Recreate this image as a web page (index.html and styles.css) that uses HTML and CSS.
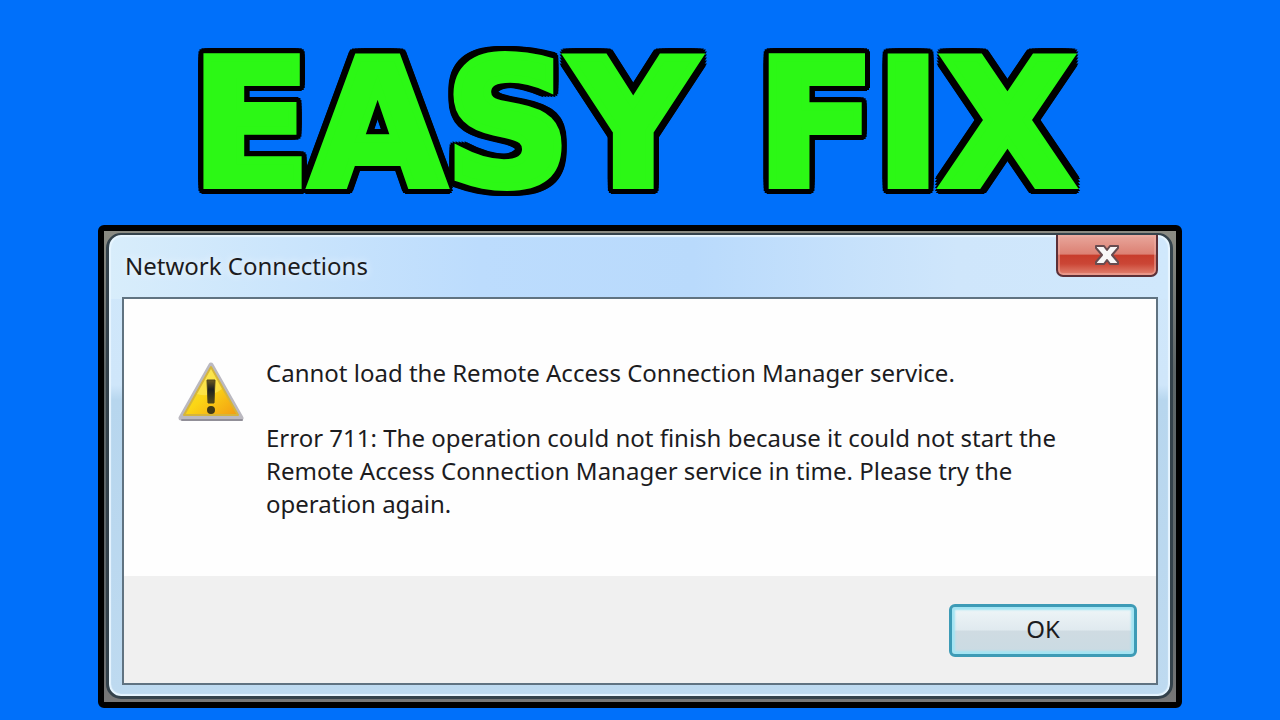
FILE: index.html
```
<!DOCTYPE html>
<html lang="en">
<head>
<meta charset="utf-8">
<meta name="viewport" content="width=device-width, initial-scale=1">
<title>Easy Fix</title>
<link rel="stylesheet" href="styles.css">
</head>
<body>
<h1 class="headline"><span>E</span><span>A</span><span>S</span><span>Y</span> <span>F</span><span>I</span><span>X</span></h1>
<main class="frame">
  <section class="window" role="dialog" aria-labelledby="title">
    <header class="titlebar">
      <h2 class="title" id="title">Network Connections</h2>
      <button class="close" type="button" aria-label="Close">
        <svg width="26" height="22" viewBox="0 0 26 22" aria-hidden="true">
          <path d="M2 2H10L13 6L16 2H24V4L18 11L24 18V20H16L13 16L10 20H2V18L8 11L2 4Z" fill="#f7f7f7" stroke="#674c50" stroke-width="2" stroke-linejoin="round"/>
        </svg>
      </button>
    </header>
    <div class="client">
      <div class="content">
        <svg class="warning" width="70" height="64" viewBox="0 0 70 64" role="img" aria-label="Warning">
          <defs>
            <linearGradient id="gold" x1="0" y1="0" x2="1" y2="1">
              <stop offset="0" stop-color="#eee34c"/>
              <stop offset=".5" stop-color="#fbd515"/>
              <stop offset="1" stop-color="#f29b12"/>
            </linearGradient>
            <linearGradient id="ink" x1="0" y1="0" x2="0" y2="1">
              <stop offset="0" stop-color="#6b5a20"/>
              <stop offset=".4" stop-color="#1d2020"/>
              <stop offset="1" stop-color="#51491a"/>
            </linearGradient>
          </defs>
          <path d="M35 5L65 58H5Z" fill="#aaa9b4" stroke="#bbb9c0" stroke-width="5" stroke-linejoin="round"/>
          <path d="M6 60H66" stroke="#918f98" stroke-width="2" stroke-linecap="round"/>
          <path d="M35 7L62 55H8Z" fill="url(#gold)" stroke="#d5b53c" stroke-width="2" stroke-linejoin="round"/>
          <path d="M35 9L21 34Q34 38 46 29Z" fill="#fff27a" opacity=".45"/>
          <path d="M31 20H39L38 43H32Z" fill="url(#ink)" stroke="#4d431d" stroke-width="1"/>
          <ellipse cx="35" cy="50" rx="4" ry="4" fill="#403916"/>
        </svg>
        <div class="message">
          <p>Cannot load the Remote Access Connection Manager service.</p>
          <p>Error 711: The operation could not finish because it could not start the Remote Access Connection Manager service in time. Please try the operation again.</p>
        </div>
      </div>
      <footer class="actions">
        <button class="ok" type="button">OK</button>
      </footer>
    </div>
  </section>
</main>
</body>
</html>
```
FILE: styles.css
```
* { box-sizing: border-box; }

body {
  margin: 0;
  min-height: 100vh;
  padding: 0 98px 12px;
  display: flex;
  flex-direction: column;
  background: #0070fa;
  color: #1c1c1e;
  font-family: "Noto Sans", "Open Sans", sans-serif;
}

.headline {
  margin: 0;
  padding: 19px 14px 0 0;
  height: 225px;
  text-align: center;
  white-space: nowrap;
  font: 700 174px/212px "DejaVu Sans", sans-serif;
  color: #2cf815;
  -webkit-text-stroke: 8px #2cf815;
  text-shadow: 9px 0 #000, -9px 0 #000, 0 9px #000, 0 -9px #000,
    9px 3px #000, 9px -3px #000, -9px 3px #000, -9px -3px #000,
    3px 9px #000, -3px 9px #000, 3px -9px #000, -3px -9px #000,
    9px 6px #000, 9px -6px #000, -9px 6px #000, -9px -6px #000,
    6px 9px #000, -6px 9px #000, 6px -9px #000, -6px -9px #000,
    8px 8px #000, -8px 8px #000, 8px -8px #000, -8px -8px #000;
}

.frame {
  flex: 1;
  display: flex;
  border: 6px solid #000;
  border-radius: 6px;
  padding: 2px 3px 3px 2px;
  background: linear-gradient(#8b8b83, #5d6668 30%, #60686b 80%, #777);
}

.window {
  flex: 1;
  display: flex;
  flex-direction: column;
  padding: 0 12px 11px 13px;
  border: 3px solid #34424b;
  border-top-width: 2px;
  border-radius: 15px;
  background: linear-gradient(90deg, #d8edfb, #bcdcfd 35%, #b9dafc 55%, #cfe6fb 80%, #d0e8fc) top / 100% 64px no-repeat,
    linear-gradient(#d0e8fb, #cfe6fa 150px, #b7d6ee 165px, #bedaf0);
  box-shadow: inset 0 0 1px 2px #e8f6ff;
}

.titlebar {
  display: flex;
  justify-content: space-between;
  align-items: flex-start;
  height: 62px;
}

.title {
  margin: 0;
  padding-left: 3px;
  font-size: 24px;
  font-weight: 400;
  line-height: 62px;
  text-shadow: 0 0 8px #fff;
}

.close {
  display: grid;
  place-items: center;
  width: 102px;
  height: 42px;
  margin: 0;
  padding: 0;
  border: 2px solid #5b3038;
  border-top: 0;
  border-radius: 0 0 7px 7px;
  background: linear-gradient(#e8a79c, #dc8073 48%, #c83c2b 50%, #cb4636 72%, #e38573);
  box-shadow: inset 0 0 0 2px #f0b0a580;
}

.client {
  flex: 1;
  display: flex;
  flex-direction: column;
  border: 2px solid #607381;
  background: #fefefe;
}

.content {
  flex: 1;
  display: flex;
  align-items: flex-start;
  gap: 20px;
  padding: 57px 48px 20px 52px;
}

.warning {
  flex: none;
  margin-top: 4px;
}

.message {
  max-width: 820px;
  font-size: 24px;
  line-height: 33px;
}

.message p { margin: 0 0 32px; }

.message p:last-child { margin: 0; }

.actions {
  display: flex;
  justify-content: flex-end;
  padding: 28px 19px 26px;
  background: #f0f0f0;
}

.ok {
  width: 188px;
  height: 53px;
  padding: 0 0 3px;
  border: 3px solid #3d9bb6;
  border-radius: 6px;
  background: linear-gradient(#eff6f8, #e0eaef 48%, #cfdbe2 52%, #cadbe3);
  box-shadow: inset 0 0 2px 3px #a3e4f3;
  color: #1c1c1e;
  font: 24px/32px "Noto Sans", "Open Sans", sans-serif;
}
```
